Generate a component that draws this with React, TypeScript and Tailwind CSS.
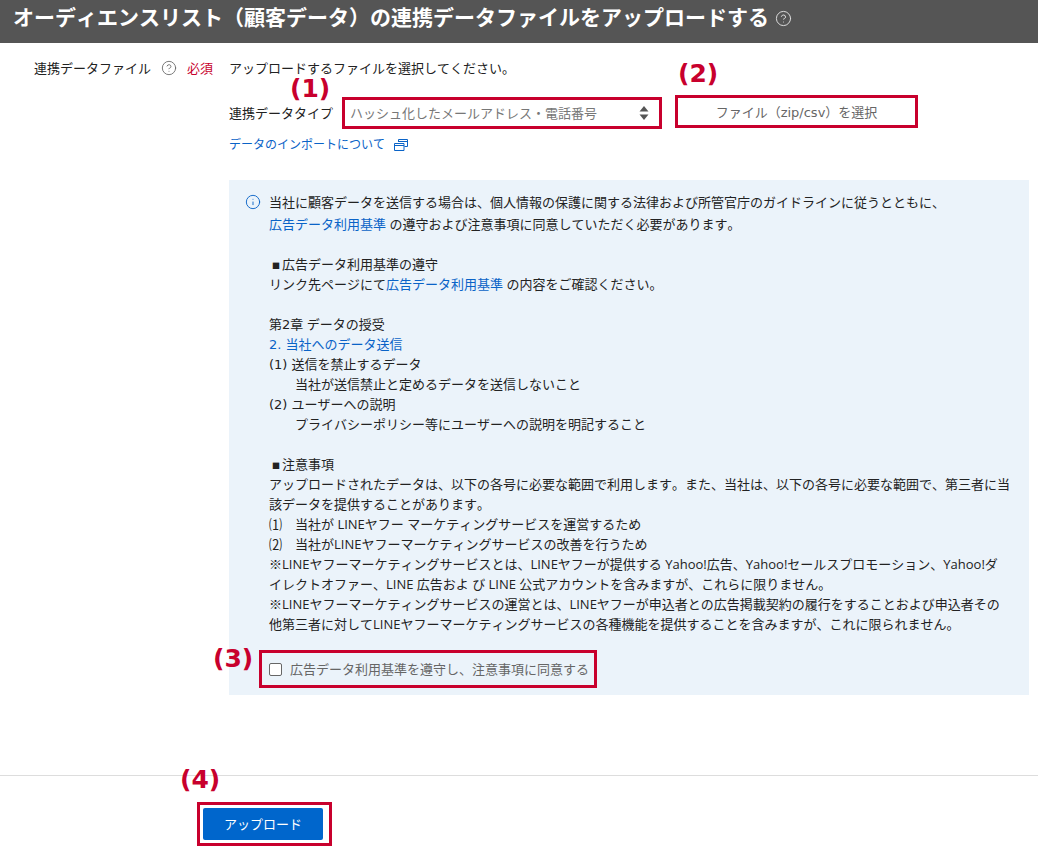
import { CircleHelp, Info } from 'lucide-react';

const font = { fontFamily: '"Open Sans", "Noto Sans CJK JP", "Liberation Sans", sans-serif' };

const Mark = ({ label, className }: { label: string; className: string }) => (
  <span
    className={`absolute whitespace-nowrap font-['DejaVu_Sans',sans-serif] text-[25px] font-bold leading-none text-[#c8002d] ${className}`}
  >
    {label}
  </span>
);

const Link = ({ children }: { children: React.ReactNode }) => (
  <a className="text-[#0a63c7]">{children}</a>
);

const Num = ({ children }: { children: React.ReactNode }) => (
  <span className="font-['DejaVu_Sans',sans-serif] leading-none">{children}</span>
);

const Square = () => <span className="ml-[3px] mr-[2px] text-[8px] leading-none">■</span>;

const App = () => {
  return (
    <div
      className="relative h-[849px] w-[1038px] overflow-hidden bg-white text-[13px] leading-5 text-[#222] [font-kerning:none] [text-spacing-trim:space-all]"
      style={font}
    >
      <header className="flex h-[43px] items-center bg-[#555555] pb-[9px] pl-[13px]">
        <h1 className="whitespace-nowrap text-[21px] font-bold leading-none text-white">
          オーディエンスリスト（顧客データ）の連携データファイルをアップロードする
        </h1>
        <CircleHelp className="ml-[6px] mt-[3px] h-[17px] w-[17px] text-[#ddd]" strokeWidth={1.4} />
      </header>

      <div className="flex pt-[15px]">
        <div className="flex w-[229px] shrink-0 items-start pl-[34px]">
          <span className="whitespace-nowrap">連携データファイル</span>
          <CircleHelp className="ml-[10px] mt-[2px] h-[16px] w-[16px] text-[#666]" strokeWidth={1.3} />
          <span className="ml-[10px] whitespace-nowrap text-[#c8002d]">必須</span>
        </div>

        <div className="w-[800px]">
          <p>アップロードするファイルを選択してください。</p>

          <div className="mt-[17px] flex items-center">
            <span className="w-[113px] whitespace-nowrap">連携データタイプ</span>
            <div className="flex h-[32px] w-[320px] items-center justify-between border-[3px] border-[#c8002d] pl-[5px] pr-[10px] text-[#777]">
              <span>ハッシュ化したメールアドレス・電話番号</span>
              <svg viewBox="0 0 10 16" className="h-[16px] w-[10px] fill-[#555]">
                <path d="M5 1 L9.5 6.5 H0.5 Z" />
                <path d="M5 15 L9.5 9.5 H0.5 Z" />
              </svg>
            </div>
            <div className="mb-[3px] ml-[13px] flex h-[33px] w-[243px] items-center justify-center border-[3px] border-[#c8002d] text-[#666]">
              <span>ファイル（<Num>zip/csv</Num>）を選択</span>
            </div>
          </div>

          <div className="mt-[4px] flex items-center text-[12px] text-[#0a63c7]">
            <span>データのインポートについて</span>
            <svg viewBox="0 0 14 12" className="ml-[9px] h-[12px] w-[14px] fill-none stroke-[#0a63c7]">
              <path d="M4.5 3V.5h9v7h-3" />
              <path d="M4.5 2.5h9" />
              <path d="M.5 4.5h9.5v7H.5z" />
              <path d="M.5 6.5h9.5" />
            </svg>
          </div>

          <div className="mt-[25px] h-[515px] w-[800px] bg-[#ebf3fa] pt-[12px]">
            <div className="flex">
              <Info className="ml-[16px] mt-[2px] h-[16px] w-[16px] shrink-0 text-[#0a63c7]" strokeWidth={1.4} />
              <div className="ml-[8px] whitespace-nowrap">
                <p className="mb-[2px]">当社に顧客データを送信する場合は、個人情報の保護に関する法律および所管官庁のガイドラインに従うとともに、</p>
                <p><Link>広告データ利用基準</Link> の遵守および注意事項に同意していただく必要があります。</p>
                <p className="mt-5"><Square />広告データ利用基準の遵守</p>
                <p>リンク先ページにて<Link>広告データ利用基準</Link> の内容をご確認ください。</p>
                <p className="mt-5">第<Num>2</Num>章 データの授受</p>
                <p><Link><Num>2. </Num>当社へのデータ送信</Link></p>
                <p><Num>(1) </Num>送信を禁止するデータ</p>
                <p className="pl-[26px]">当社が送信禁止と定めるデータを送信しないこと</p>
                <p><Num>(2) </Num>ユーザーへの説明</p>
                <p className="pl-[26px]">プライバシーポリシー等にユーザーへの説明を明記すること</p>
                <p className="mt-5"><Square />注意事項</p>
                <p>アップロードされたデータは、以下の各号に必要な範囲で利用します。また、当社は、以下の各号に必要な範囲で、第三者に当</p>
                <p>該データを提供することがあります。</p>
                <p>⑴　当社が LINEヤフー マーケティングサービスを運営するため</p>
                <p>⑵　当社がLINEヤフーマーケティングサービスの改善を行うため</p>
                <p>※LINEヤフーマーケティングサービスとは、LINEヤフーが提供する Yahoo!広告、Yahoo!セールスプロモーション、Yahoo!ダ</p>
                <p>イレクトオファー、LINE 広告およ び LINE 公式アカウントを含みますが、これらに限りません。</p>
                <p>※LINEヤフーマーケティングサービスの運営とは、LINEヤフーが申込者との広告掲載契約の履行をすることおよび申込者その</p>
                <p>他第三者に対してLINEヤフーマーケティングサービスの各種機能を提供することを含みますが、これに限られません。</p>
              </div>
            </div>
            <div className="ml-[30px] mt-[16px] flex h-[38px] w-[338px] items-center border-[3px] border-[#c8002d] pl-[7px] text-[#666]">
              <span className="h-[13px] w-[13px] rounded-[2px] border border-[#666] bg-white" />
              <span className="ml-[8px] whitespace-nowrap">広告データ利用基準を遵守し、注意事項に同意する</span>
            </div>
          </div>
        </div>
      </div>

      <footer className="mt-[80px] border-t border-[#ddd] pl-[197px] pt-[26px]">
        <div className="w-[135px] border-[3px] border-[#c8002d] px-[3px] py-[3px]">
          <button className="flex h-[32px] w-[120px] items-center justify-center rounded-[2px] bg-[#0066cc] text-white">
            アップロード
          </button>
        </div>
      </footer>

      <Mark label="(1)" className="left-[290px] top-[76px]" />
      <Mark label="(2)" className="left-[678px] top-[61px]" />
      <Mark label="(3)" className="left-[213px] top-[646px]" />
      <Mark label="(4)" className="left-[180px] top-[767px]" />
    </div>
  );
};

export default App;
